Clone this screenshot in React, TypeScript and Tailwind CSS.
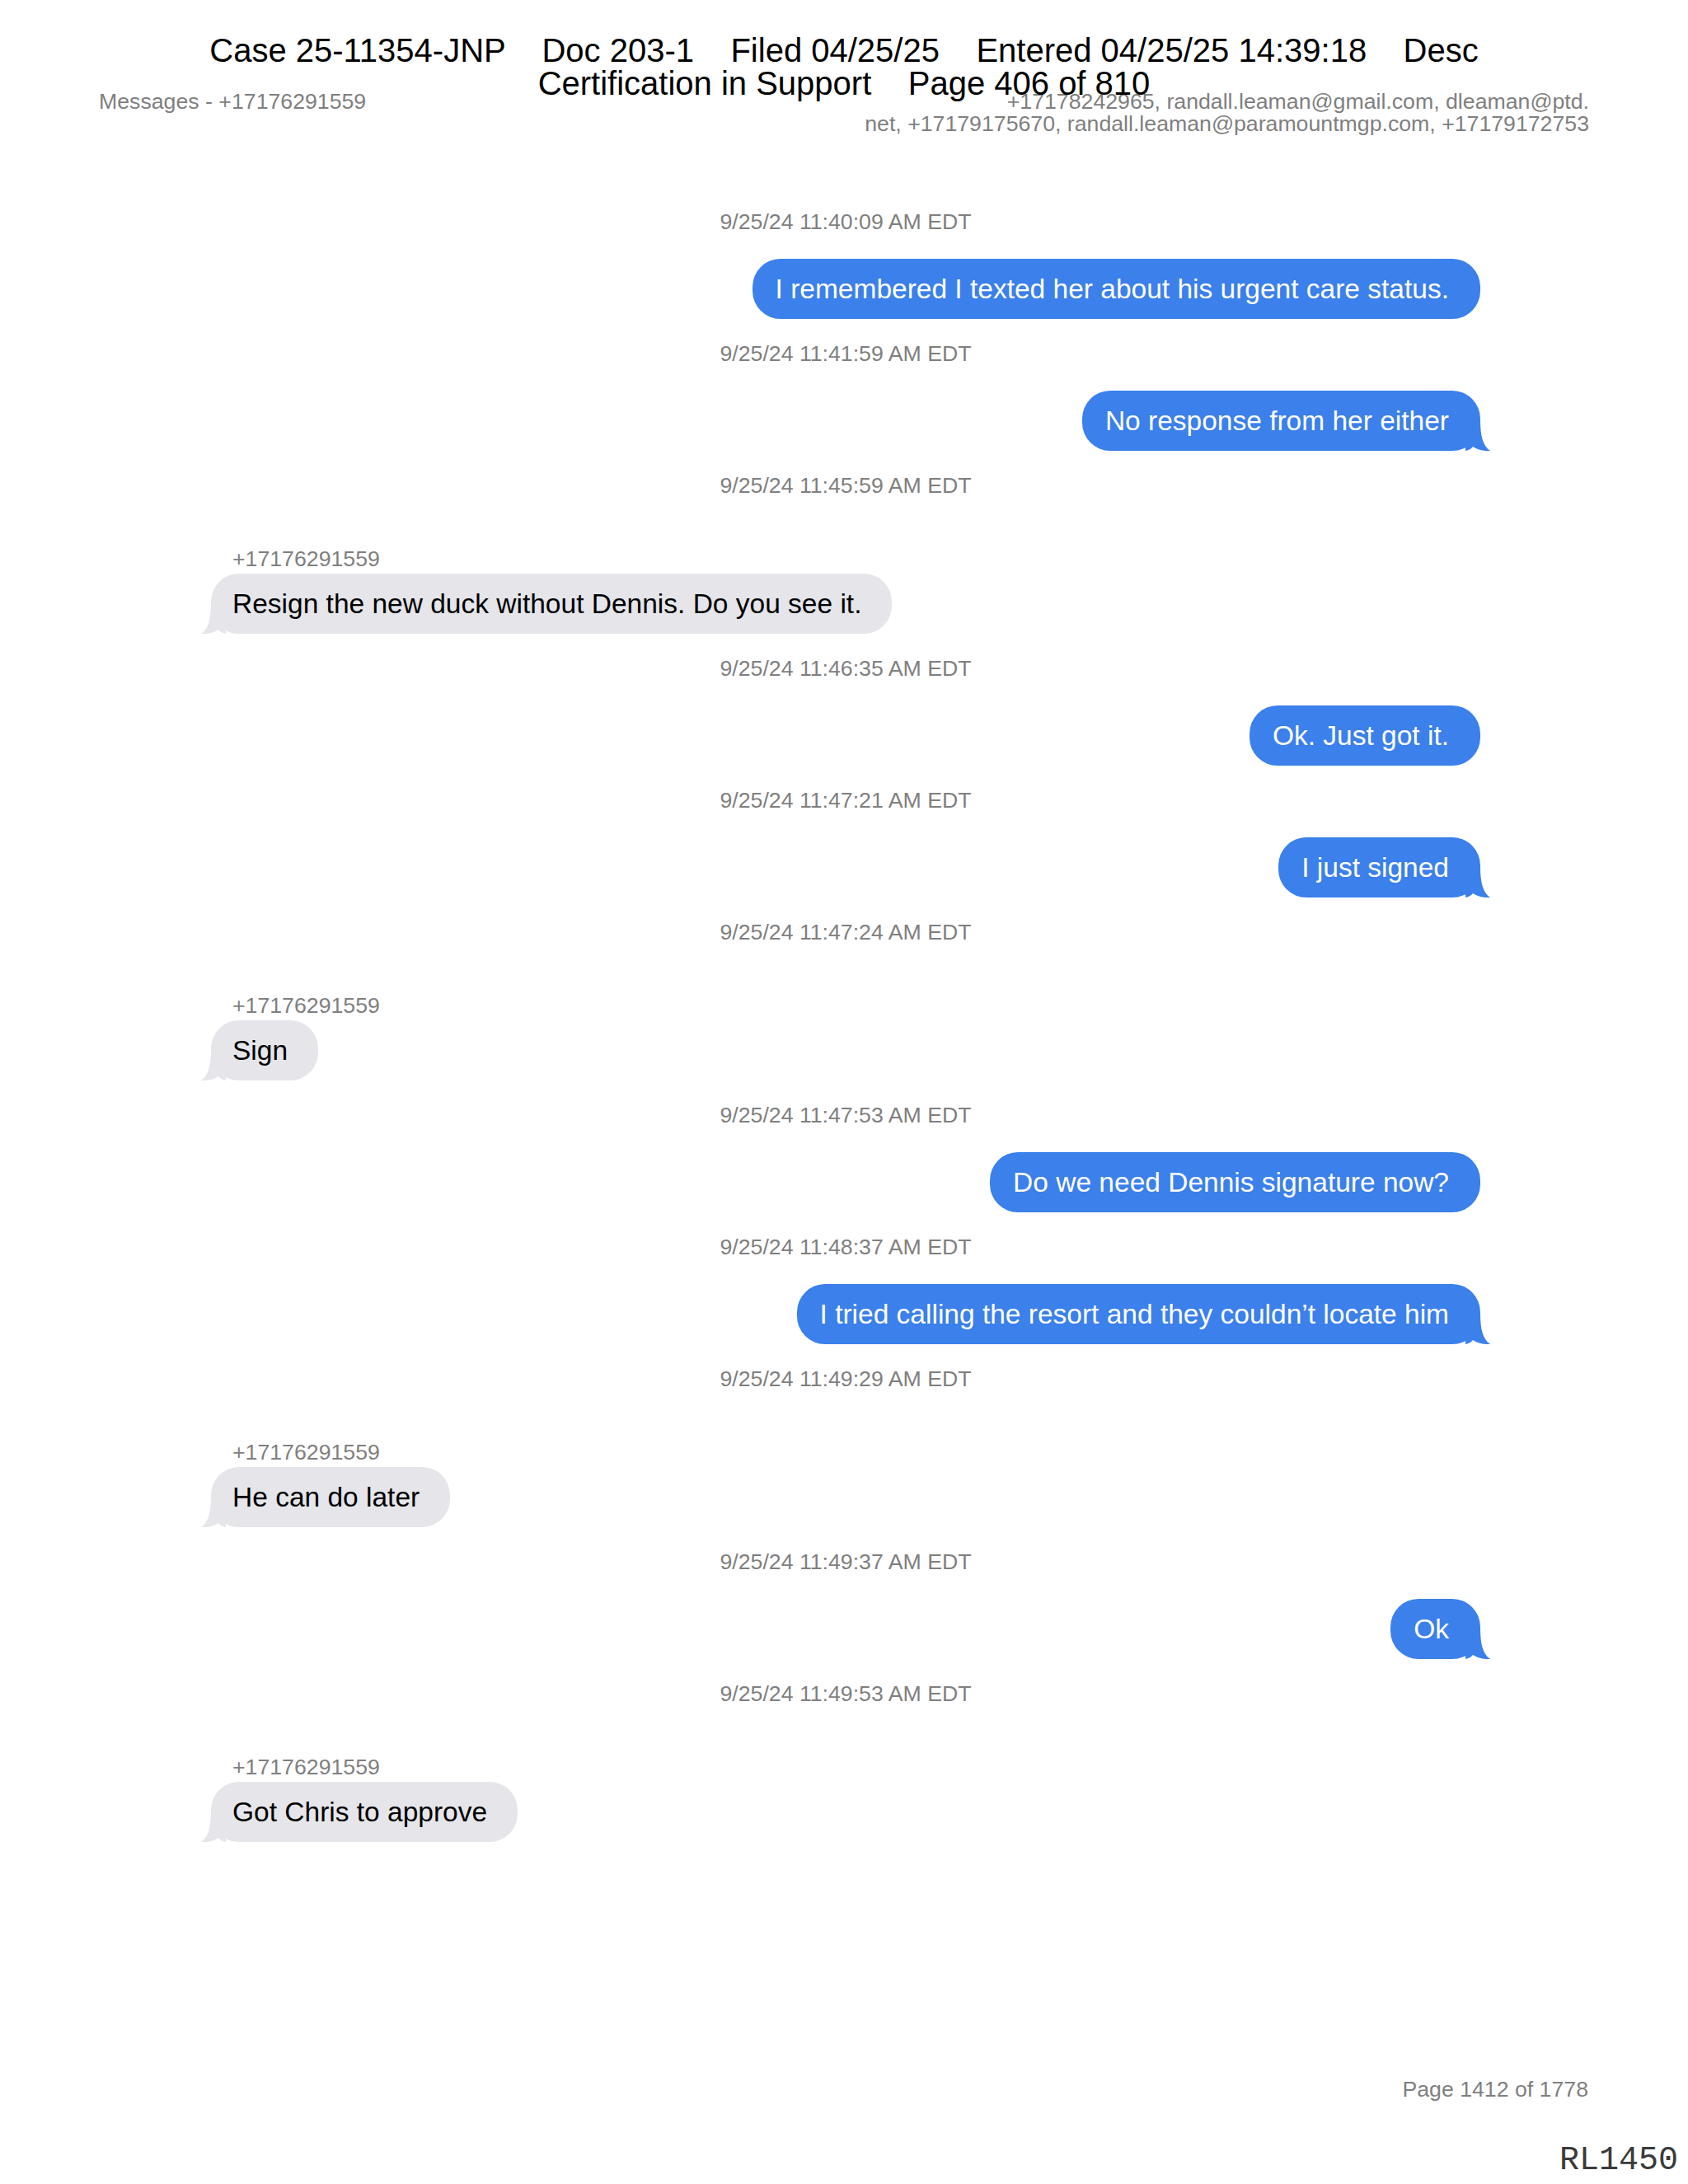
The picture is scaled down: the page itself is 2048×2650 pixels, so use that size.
import React from 'react';

type Msg = {
  time: string;
  text: string;
  from: 'me' | 'them';
  tail?: boolean;
};

const SENDER = '+17176291559';

const messages: Msg[] = [
  { time: '9/25/24 11:40:09 AM EDT', text: 'I remembered I texted her about his urgent care status.', from: 'me' },
  { time: '9/25/24 11:41:59 AM EDT', text: 'No response from her either', from: 'me', tail: true },
  { time: '9/25/24 11:45:59 AM EDT', text: 'Resign the new duck without Dennis. Do you see it.', from: 'them', tail: true },
  { time: '9/25/24 11:46:35 AM EDT', text: 'Ok. Just got it.', from: 'me' },
  { time: '9/25/24 11:47:21 AM EDT', text: 'I just signed', from: 'me', tail: true },
  { time: '9/25/24 11:47:24 AM EDT', text: 'Sign', from: 'them', tail: true },
  { time: '9/25/24 11:47:53 AM EDT', text: 'Do we need Dennis signature now?', from: 'me' },
  { time: '9/25/24 11:48:37 AM EDT', text: 'I tried calling the resort and they couldn\u2019t locate him', from: 'me', tail: true },
  { time: '9/25/24 11:49:29 AM EDT', text: 'He can do later', from: 'them', tail: true },
  { time: '9/25/24 11:49:37 AM EDT', text: 'Ok', from: 'me', tail: true },
  { time: '9/25/24 11:49:53 AM EDT', text: 'Got Chris to approve', from: 'them', tail: true },
];

function Tail({ color, side }: { color: string; side: 'left' | 'right' }) {
  return (
    <svg
      width="30"
      height="38"
      viewBox="0 0 30 38"
      className={
        side === 'right'
          ? 'absolute bottom-0 right-[-12px]'
          : 'absolute bottom-0 left-[-12px] -scale-x-100'
      }
    >
      <path d="M0 0 H18 C18 20 21 32 30 38 C23 38.5 15 37 9 33 C7 35.5 4 37.5 0 38 Z" fill={color} />
    </svg>
  );
}

function Bubble({ m }: { m: Msg }) {
  const mine = m.from === 'me';
  return (
    <div className={mine ? 'flex justify-end' : 'flex justify-start'}>
      <div
        className={
          mine
            ? 'relative rounded-[34px] bg-[#3b80eb] pl-[28px] pr-[38px] py-[16px] text-[33.5px] leading-[41px] text-white whitespace-nowrap'
            : 'relative rounded-[34px] bg-[#e5e5ea] pl-[26px] pr-[37px] py-[16px] text-[33.5px] leading-[41px] text-black whitespace-nowrap'
        }
      >
        <span className="relative z-10">{m.text}</span>
        {m.tail && <Tail color={mine ? '#3b80eb' : '#e5e5ea'} side={mine ? 'right' : 'left'} />}
      </div>
    </div>
  );
}

export default function App() {
  return (
    <div className="relative h-[2650px] w-[2048px] overflow-hidden bg-white font-['Liberation_Sans',Arial,sans-serif]">
      {/* court filing stamp, laid over the page */}
      <div className="absolute left-0 right-0 top-[41px] z-20 text-center text-[40px] leading-[40px] text-black whitespace-pre">
        <div>{'Case 25-11354-JNP    Doc 203-1    Filed 04/25/25    Entered 04/25/25 14:39:18    Desc'}</div>
        <div>{'Certification in Support    Page 406 of 810'}</div>
      </div>

      <div className="pt-[110px]">
        {/* export header */}
        <div className="flex justify-between px-[120px] text-[26.7px] leading-[27px] text-[#7f7f7f]">
          <div>Messages - {SENDER}</div>
          <div className="text-right">
            +17178242965, randall.leaman@gmail.com, dleaman@ptd.
            <br />
            net, +17179175670, randall.leaman@paramountmgp.com, +17179172753
          </div>
        </div>

        {/* conversation */}
        <div className="ml-[256px] mt-[88px] w-[1540px]">
          {messages.map((m, i) => (
            <div key={i} className="pt-[2px] pb-[25px]">
              <div className="text-center text-[26.7px] leading-[30px] text-[#7f7f7f]">{m.time}</div>
              {m.from === 'me' ? (
                <div className="mt-[30px]">
                  <Bubble m={m} />
                </div>
              ) : (
                <div className="mt-[59px]">
                  <div className="pl-[26px] text-[26.7px] leading-[30px] text-[#7f7f7f]">{SENDER}</div>
                  <div className="mt-[3px]">
                    <Bubble m={m} />
                  </div>
                </div>
              )}
            </div>
          ))}
        </div>

        {/* footer */}
        <div className="mt-[260px] pr-[121px] text-right text-[26.7px] leading-[30px] text-[#7f7f7f]">Page 1412 of 1778</div>
        <div className="mt-[52px] pr-[12px] text-right font-['Liberation_Mono',monospace] text-[40px] leading-[40px] text-[#3a3a3a]">
          RL1450
        </div>
      </div>
    </div>
  );
}
